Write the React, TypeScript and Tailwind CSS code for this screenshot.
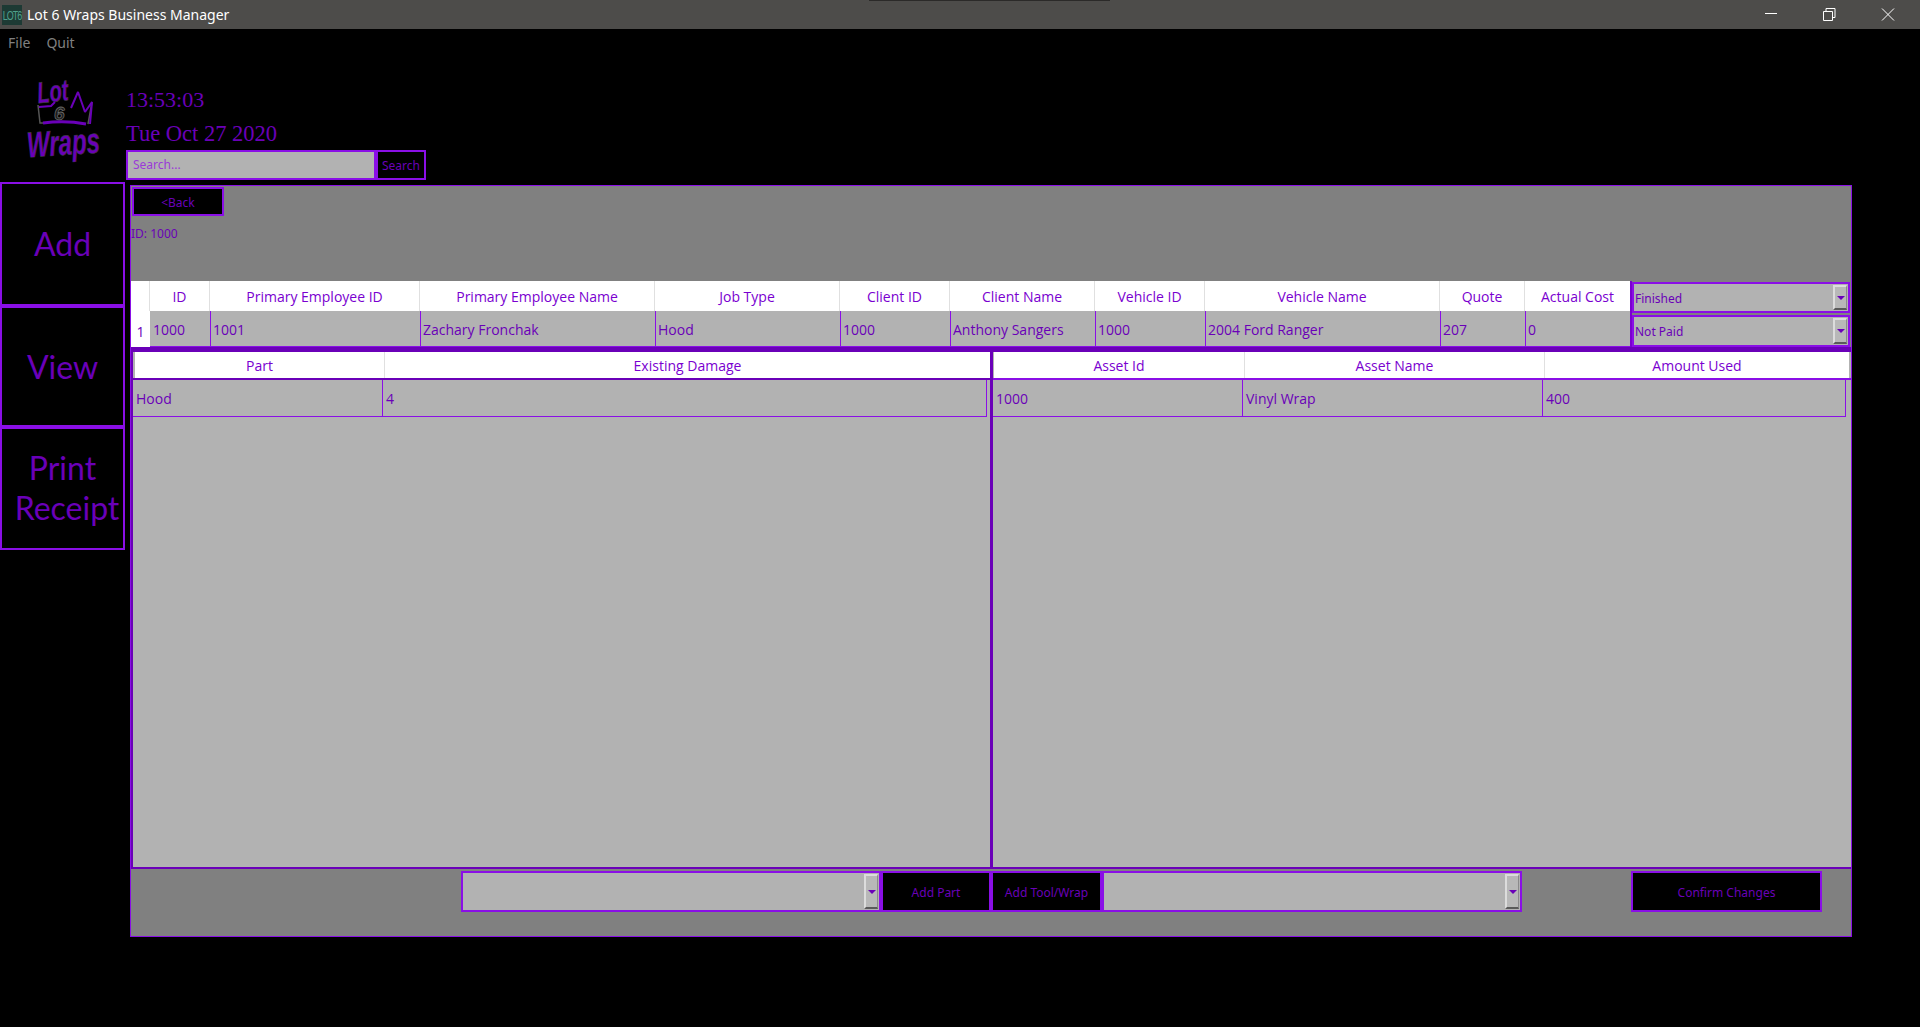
const mainColumns = "grid-cols-[19px_60px_210px_235px_185px_110px_145px_110px_235px_85px_106px]";

const mainHeaders = [
  "",
  "ID",
  "Primary Employee ID",
  "Primary Employee Name",
  "Job Type",
  "Client ID",
  "Client Name",
  "Vehicle ID",
  "Vehicle Name",
  "Quote",
  "Actual Cost",
];

const mainRow = [
  "1000",
  "1001",
  "Zachary Fronchak",
  "Hood",
  "1000",
  "Anthony Sangers",
  "1000",
  "2004 Ford Ranger",
  "207",
  "0",
];

function WindowControls() {
  return (
    <div className="flex items-center text-white">
      <svg className="w-[46px] h-[29px]" viewBox="0 0 46 29" fill="none" stroke="currentColor">
        <path d="M17 13.500h12" />
      </svg>
      <svg className="ml-[16px] w-[46px] h-[29px]" viewBox="0 0 46 29" fill="none" stroke="currentColor">
        <path d="M13.500 11.500h9v9h-9z" />
        <path d="M16 11v-2.500h9v9h-2.500" />
      </svg>
      <svg className="ml-[9px] mr-[9px] w-[46px] h-[29px]" viewBox="0 0 46 29" fill="none" stroke="currentColor">
        <path d="M17 8.500l12 12M29 8.500l-12 12" />
      </svg>
    </div>
  );
}

function Logo() {
  return (
    <svg className="w-[90px] h-[96px]" viewBox="0 0 90 96" fill="none">
      <g fontFamily="Liberation Sans, sans-serif" fontWeight="700" fontStyle="italic">
        <text x="17" y="32" fontSize="30" fill="#6a00b8" stroke="#3c3c3c" strokeWidth="0.6" textLength="31" lengthAdjust="spacingAndGlyphs" transform="rotate(-6 30 20)">
          Lot
        </text>
        <text x="7" y="85" fontSize="36" fill="#6a00b8" stroke="#3c3c3c" strokeWidth="0.6" textLength="73" lengthAdjust="spacingAndGlyphs" transform="rotate(-4 44 75)">
          Wraps
        </text>
        <text x="34" y="50" fontSize="19" fill="#1c1c1c" stroke="#6a6a6a" strokeWidth="0.8">
          6
        </text>
      </g>
      <path d="M18 35l2 18h6M68 54l4-22" stroke="#555" strokeWidth="1.500" />
      <path d="M19 37l12-1 4-4" stroke="#6a00b8" strokeWidth="2" />
      <path d="M51 38l7-16 7 20 7-10-2 22" stroke="#6a00b8" strokeWidth="2" strokeLinejoin="bevel" />
      <path d="M23 53c14-2 28-2 43 1" stroke="#6a00b8" strokeWidth="3" />
    </svg>
  );
}

function ComboBox({ label, className }: { label?: string; className: string }) {
  return (
    <div className={`flex items-stretch border-2 border-[#8a0fe6] bg-[#b2b2b2] ${className}`}>
      <div className="flex-1 flex items-center pl-px pt-[2px] text-[12px] text-[#6a00b8] font-['Noto_Sans',sans-serif]">
        {label}
      </div>
      <div className="w-[14px] my-px mr-px flex items-center justify-center bg-[#b8b8b8] border-t-2 border-l-2 border-t-[#dcdcdc] border-l-[#dcdcdc] border-b-2 border-r border-b-[#5a5a5a] border-r-[#8a8a8a]">
        <div className="w-0 h-0 border-x-[4px] border-x-transparent border-t-[4px] border-t-[#6a00b8]" />
      </div>
    </div>
  );
}

function BlackButton({ label, className }: { label: string; className: string }) {
  return (
    <button className={`bg-black border-2 border-[#8a0fe6] pt-[2px] text-[#6a00b8] text-[12px] font-['Noto_Sans',sans-serif] ${className}`}>
      {label}
    </button>
  );
}

function SideButton({ children, className }: { children: React.ReactNode; className: string }) {
  return (
    <button className={`w-[125px] border-2 border-[#8a0fe6] bg-black text-[#6a00b8] text-[32px] leading-[40px] font-['Lato',sans-serif] ${className}`}>
      {children}
    </button>
  );
}

function HeaderCell({ label, className = "" }: { label: string; className?: string }) {
  return (
    <div className={`flex items-center justify-center bg-white border-r border-[#e0e0e0] text-[14px] text-[#7a00d0] whitespace-nowrap ${className}`}>
      {label}
    </div>
  );
}

function DataCell({ label, className = "" }: { label: string; className?: string }) {
  return (
    <div className={`flex items-center bg-[#b2b2b2] border-l border-b border-[#8a0fe6] text-[14px] text-[#6a00b8] whitespace-nowrap overflow-hidden ${className}`}>
      {label}
    </div>
  );
}

export default function App() {
  return (
    <div className="relative w-[1920px] h-[1027px] bg-black overflow-hidden font-['Open_Sans',sans-serif]">
      {/* Title bar */}
      <div className="h-[29px] bg-[#4d4c4a] flex items-center justify-between">
        <div className="flex items-center">
          <div className="ml-[2px] w-[20px] h-[20px] bg-[#1d3a34] text-[#4fa08c] text-[9px] leading-[20px] tracking-[-1px] text-center font-['Liberation_Sans',sans-serif]">
            <span className="inline-block scale-y-150">LOT6</span>
          </div>
          <span className="ml-[5px] text-[14px] text-white font-['Noto_Sans',sans-serif]">
            Lot 6 Wraps Business Manager
          </span>
        </div>
        <WindowControls />
      </div>
      <div className="absolute top-0 left-[869px] w-[241px] h-px bg-[#2b2a29]" />

      {/* Menu */}
      <div className="h-[26px] flex items-center pl-[8px] gap-[16px] text-[14px] text-[#808080] font-['Noto_Sans',sans-serif]">
        <span>File</span>
        <span>Quit</span>
      </div>

      <div className="flex">
        {/* Left column */}
        <div className="w-[126px] shrink-0">
          <div className="h-[127px] pt-[15px] pl-[20px]">
            <Logo />
          </div>
          <SideButton className="h-[124px]">Add</SideButton>
          <SideButton className="h-[121px] block">View</SideButton>
          <SideButton className="h-[123px] block pb-[2px]">
            Print
            <br />
            <span className="ml-[9px]">Receipt</span>
          </SideButton>
        </div>

        {/* Right column */}
        <div className="flex-1">
          <div className="h-[95px] pt-[31px] font-['Liberation_Serif',serif] text-[#6a00b8]">
            <div className="h-[34px] text-[22px] leading-[28px]">13:53:03</div>
            <div className="text-[22.500px] leading-[28px]">Tue Oct 27 2020</div>
          </div>
          <div className="flex h-[30px]">
            <div className="w-[250px] flex items-center pl-[5px] border-2 border-[#8a0fe6] bg-[#b2b2b2] text-[12px] text-[#9a3ad8] font-['Noto_Sans',sans-serif]">
              Search...
            </div>
            <BlackButton label="Search" className="w-[50px]" />
          </div>

          {/* Main panel */}
          <div className="mt-[5px] ml-[4px] w-[1722px] h-[752px] border border-[#8a0fe6] bg-[#808080] flex flex-col">
            <div className="h-[95px] shrink-0">
              <BlackButton label="<Back" className="mt-px ml-px w-[92px] h-[29px] block" />
              <div className="mt-[9px] text-[12px] text-[#6a00b8] font-['Noto_Sans',sans-serif]">ID: 1000</div>
            </div>

            {/* Job row */}
            <div className="flex h-[66px] shrink-0">
              <div className={`grid ${mainColumns} grid-rows-[30px_36px] w-[1500px]`}>
                {mainHeaders.map((header, i) => (
                  <HeaderCell key={i} label={header} />
                ))}
                <div className="flex items-end justify-center pb-[5px] bg-white text-[14px] text-[#6a00b8]">1</div>
                {mainRow.map((value, i) => (
                  <DataCell
                    key={i}
                    label={value}
                    className={i === 0 ? "border-l-0 pt-[2px] pl-[3px]" : "pt-[2px] pl-[2px]"}
                  />
                ))}
              </div>
              <div className="w-[220px] flex flex-col justify-between pt-px border-l-2 border-[#7a00d0] -ml-px">
                <ComboBox label="Finished" className="h-[31px]" />
                <ComboBox label="Not Paid" className="h-[32px]" />
              </div>
            </div>
            <div className="h-[5px] shrink-0 bg-[#6a00b8]" />

            {/* Parts and assets */}
            <div className="flex-1 flex bg-[#b2b2b2] border-b-2 border-[#6a00b8]">
              <div className="w-[859px] border-l-2 border-[#6a00b8]">
                <div className="grid grid-cols-[250px_605px] h-[28px] pl-[2px] border-b-2 border-[#6a00b8]">
                  <HeaderCell label="Part" />
                  <HeaderCell label="Existing Damage" className="border-r-0" />
                </div>
                <div className="grid grid-cols-[249px_605px] h-[37px]">
                  <DataCell label="Hood" className="border-l-0 pl-[3px]" />
                  <DataCell label="4" className="border-r pl-[3px]" />
                </div>
              </div>
              <div className="flex-1 border-l-[3px] border-[#6a00b8]">
                <div className="grid grid-cols-[251px_300px_304px] h-[28px] pl-px border-b-2 border-[#8a0fe6]">
                  <HeaderCell label="Asset Id" />
                  <HeaderCell label="Asset Name" />
                  <HeaderCell label="Amount Used" className="border-r-0" />
                </div>
                <div className="grid grid-cols-[249px_300px_304px] h-[37px]">
                  <DataCell label="1000" className="border-l-0 pl-[3px]" />
                  <DataCell label="Vinyl Wrap" className="pl-[3px]" />
                  <DataCell label="400" className="border-r pl-[3px]" />
                </div>
              </div>
            </div>

            {/* Bottom bar */}
            <div className="h-[67px] shrink-0 flex items-start pt-[2px] pl-[330px]">
              <ComboBox className="w-[420px] h-[41px]" />
              <BlackButton label="Add Part" className="w-[110px] h-[41px]" />
              <BlackButton label="Add Tool/Wrap" className="w-[111px] h-[41px]" />
              <ComboBox className="w-[420px] h-[41px]" />
              <BlackButton label="Confirm Changes" className="ml-[109px] w-[191px] h-[41px]" />
            </div>
          </div>
        </div>
      </div>
    </div>
  );
}
